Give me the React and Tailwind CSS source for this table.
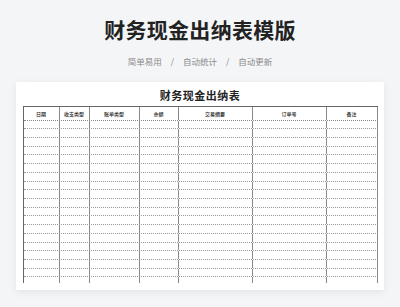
import React from "react";

const cols = [
    { w: "w-[36px]", label: "日期" },
    { w: "w-[30px]", label: "收支类型" },
    { w: "w-[50px]", label: "账单类型" },
    { w: "w-[39px]", label: "余额" },
    { w: "w-[74px]", label: "交易摘要" },
    { w: "w-[74px]", label: "订单号" },
    { w: "w-[51px]", label: "备注" },
];

const rows = Array.from({ length: 19 }, (_, i) => i);

const App = () => {
    return (
        <div
            className="w-[400px] h-[307px] overflow-hidden bg-[#f4f5f7] flex flex-col items-center"
            style={{ fontFamily: '"Noto Sans CJK SC", "Noto Sans", sans-serif' }}
        >
            <h1 className="mt-[19px] text-[21px] leading-none font-bold text-[#222] tracking-[0.3px]">
                财务现金出纳表模版
            </h1>

            <div className="mt-[17px] flex items-center gap-[9px] text-[8.5px] leading-none text-[#8a8a8a]">
                <span>简单易用</span>
                <span>/</span>
                <span>自动统计</span>
                <span>/</span>
                <span>自动更新</span>
            </div>

            <div className="mt-[16px] w-[368px] h-[208px] bg-white shadow-[0_2px_8px_rgba(0,0,0,0.07)] flex flex-col items-center">
                <div className="mt-[8px] text-[11px] leading-none font-bold text-[#222] tracking-[0.5px]">
                    财务现金出纳表
                </div>

                <div className="mt-[5px] w-[355px] h-[177px] overflow-hidden border-t border-l border-[#666]">
                    <div className="flex h-[14px] border-b border-dotted border-b-[#888]">
                        {cols.map((c) => (
                            <div
                                key={c.label}
                                className={`${c.w} border-r border-[#888] flex items-center justify-center text-[5px] leading-none font-medium text-[#222]`}
                            >
                                {c.label}
                            </div>
                        ))}
                    </div>
                    {rows.map((r) => (
                        <div key={r} className="flex h-[8.72px] border-b border-dotted border-b-[#999]">
                            {cols.map((c) => (
                                <div key={c.label} className={`${c.w} border-r border-[#888]`} />
                            ))}
                        </div>
                    ))}
                </div>
            </div>
        </div>
    );
};

export default App;
